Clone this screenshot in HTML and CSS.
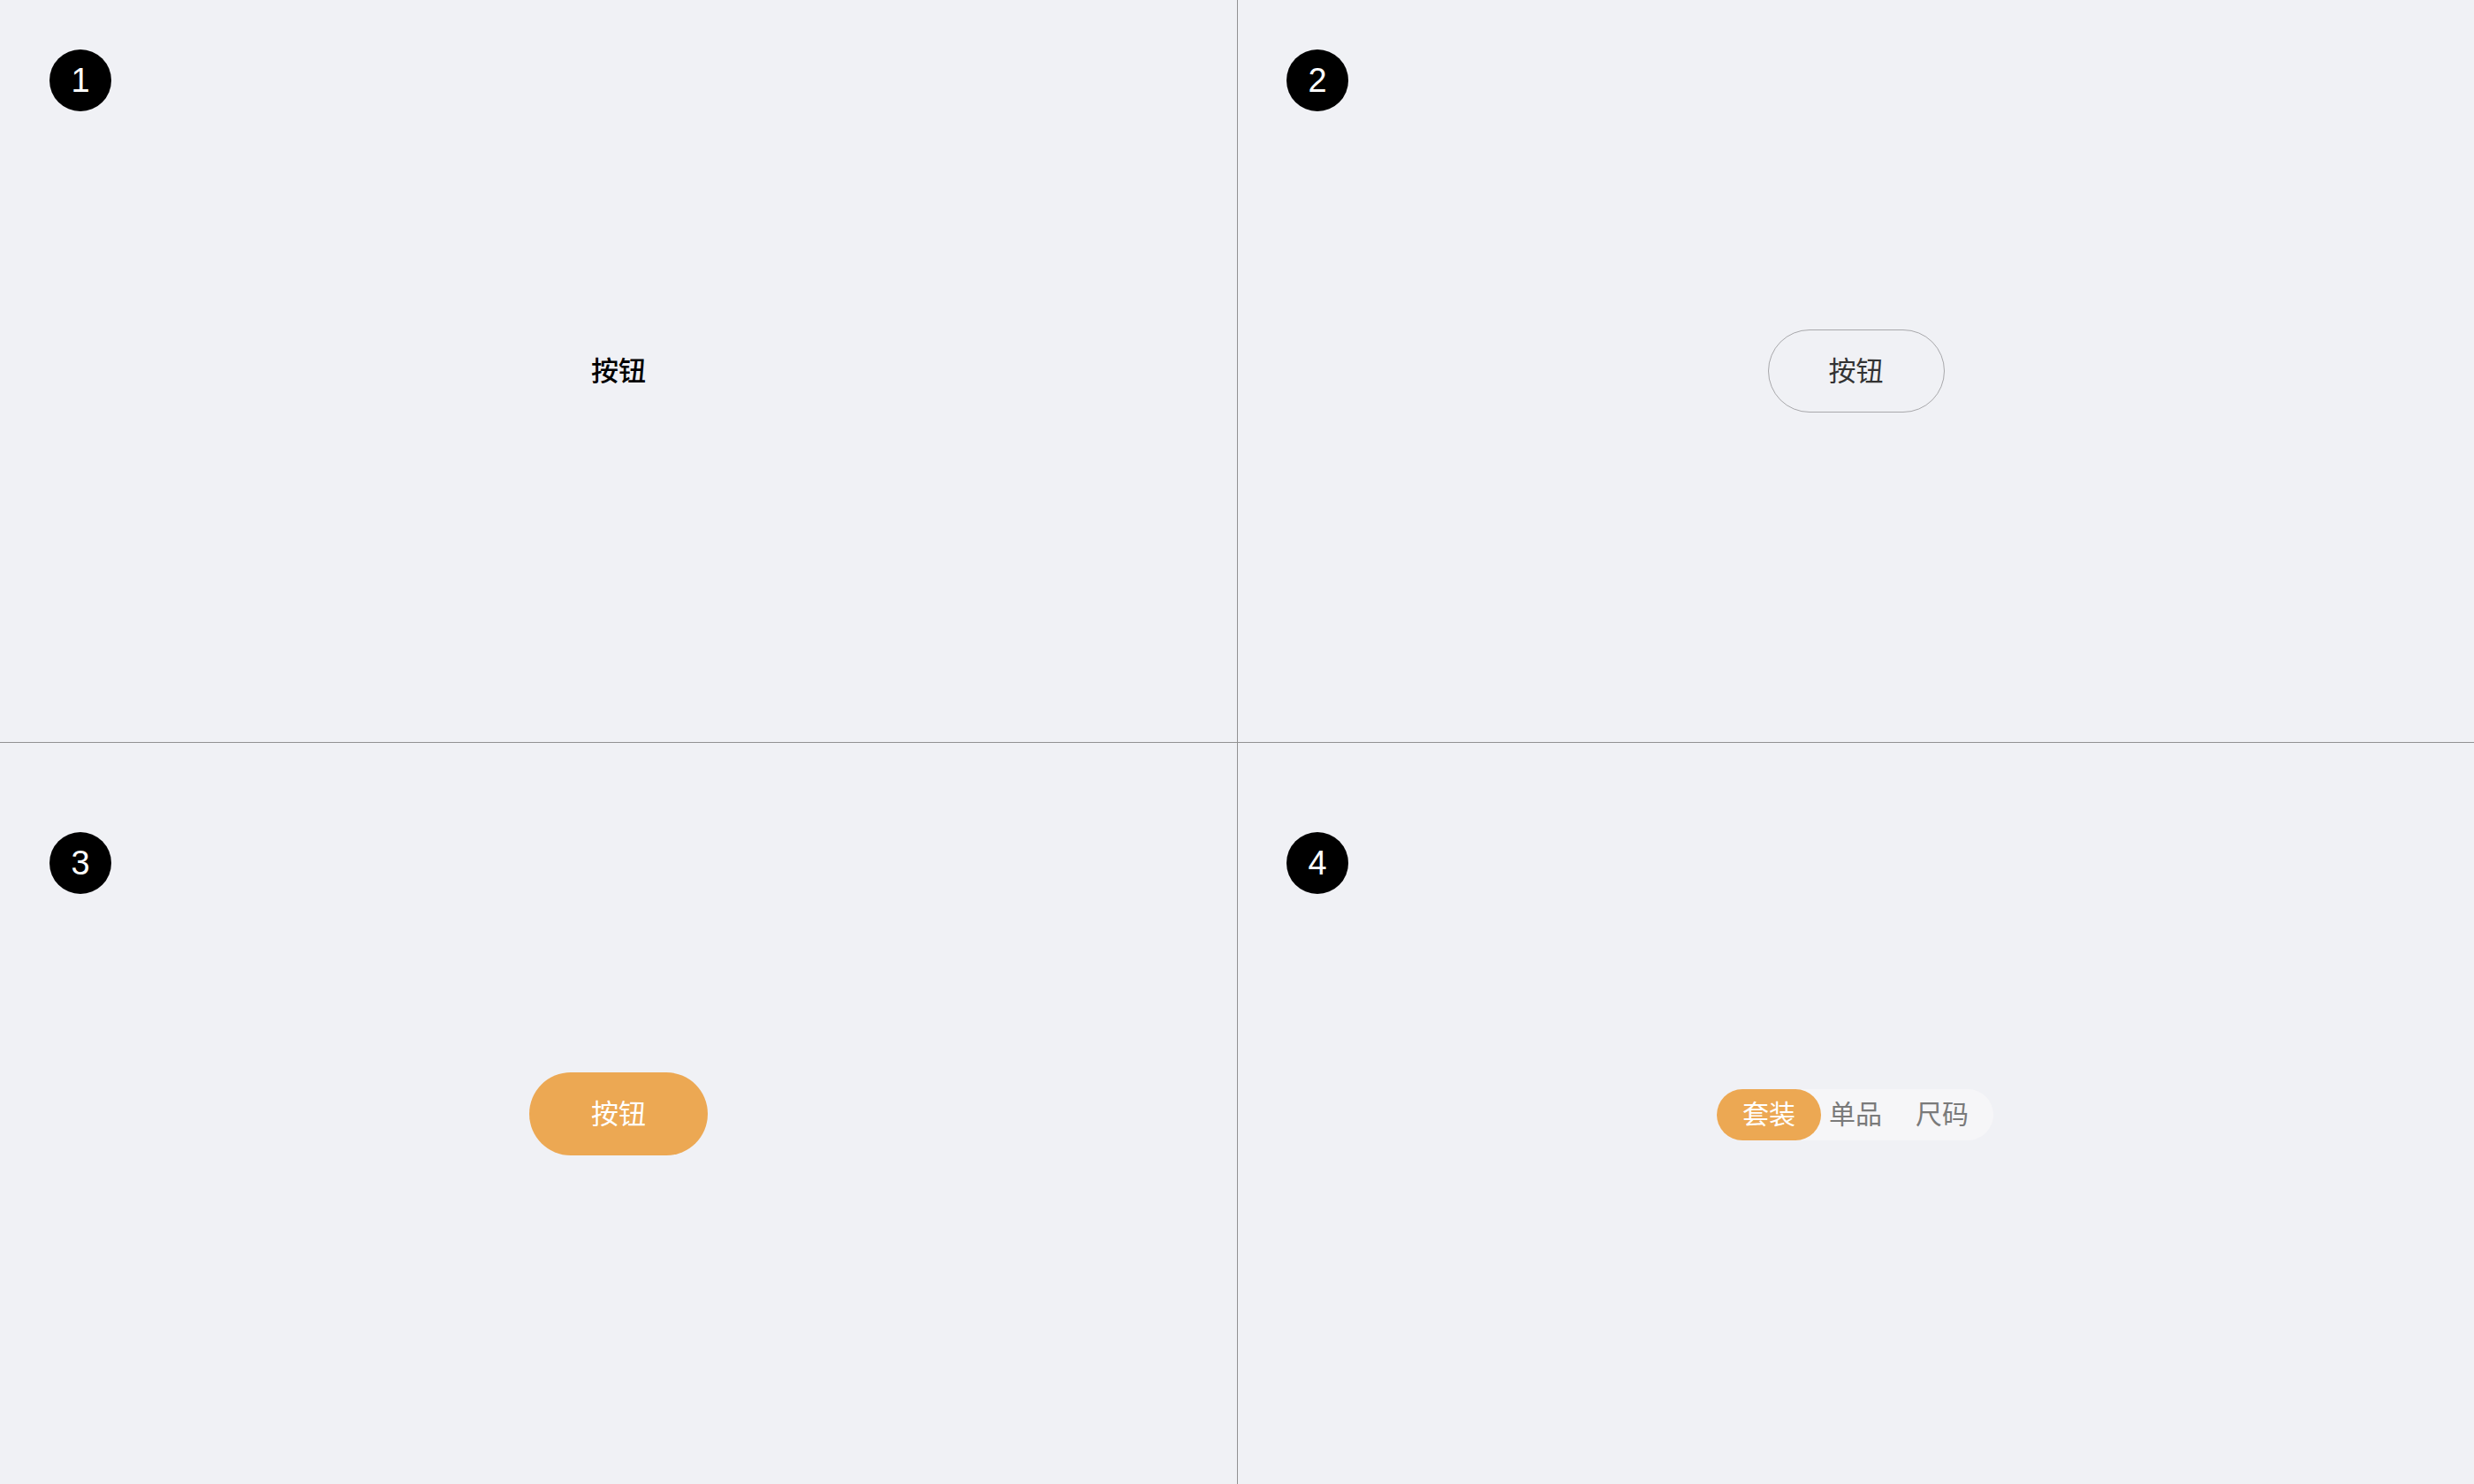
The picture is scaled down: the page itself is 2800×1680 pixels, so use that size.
FILE: index.html
```html
<!DOCTYPE html>
<html lang="zh">
<head>
<meta charset="utf-8">
<title>Buttons</title>
<link rel="stylesheet" href="styles.css">
</head>
<body>
<div class="board">
  <section class="panel">
    <span class="badge">1</span>
    <button class="btn btn-text">按钮</button>
  </section>
  <section class="panel panel-right">
    <span class="badge">2</span>
    <button class="btn btn-outline">按钮</button>
  </section>
  <section class="panel panel-bottom">
    <span class="badge badge-low">3</span>
    <button class="btn btn-fill">按钮</button>
  </section>
  <section class="panel panel-right panel-bottom">
    <span class="badge badge-low">4</span>
    <div class="segment">
      <span class="seg-item seg-active">套装</span>
      <span class="seg-item seg-mid">单品</span>
      <span class="seg-item seg-last">尺码</span>
    </div>
  </section>
</div>
</body>
</html>
```
FILE: styles.css
```css
* { box-sizing: border-box; }
html, body { margin: 0; padding: 0; }
body {
  background: #f0f1f5;
  font-family: "Noto Sans CJK SC", "Noto Sans", sans-serif;
  width: 2800px;
  height: 1680px;
  overflow: hidden;
}
.board {
  display: grid;
  grid-template-columns: 1400px 1400px;
  grid-template-rows: 840px 840px;
}
.panel {
  display: grid;
  grid-template-columns: 1fr;
  grid-template-rows: 1fr;
  background: #f0f1f5;
}
.panel-right { border-left: 1px solid #929292; }
.panel-bottom { border-top: 1px solid #929292; }
.panel > * { grid-area: 1 / 1; }
.badge {
  justify-self: start;
  align-self: start;
  margin: 56px 0 0 56px;
  width: 70px;
  height: 70px;
  border-radius: 50%;
  background: #000;
  color: #fff;
  font-family: "Liberation Sans", Arial, sans-serif;
  font-size: 38px;
  line-height: 1;
  display: flex;
  align-items: center;
  justify-content: center;
}
.panel-right .badge { margin-left: 55px; }
.badge-low { margin-top: 101px; }
.btn {
  justify-self: center;
  align-self: center;
  font-family: "Noto Sans CJK SC", sans-serif;
  font-size: 31px;
  line-height: 1;
  border: none;
  background: none;
  padding: 0 0 5px 0;
}
.btn-text {
  color: #000;
  font-weight: 500;
}
.btn-outline {
  width: 200px;
  height: 94px;
  border: 1.5px solid #a8a8ab;
  border-radius: 47px;
  color: #333;
}
.btn-fill {
  width: 202px;
  height: 94px;
  border-radius: 47px;
  background: #eca853;
  color: #fff;
}
.segment {
  justify-self: center;
  align-self: center;
  display: flex;
  align-items: center;
  height: 58px;
  border-radius: 29px;
  background: #f6f6f8;
  margin-left: -2px;
  margin-top: 2px;
}
.seg-item {
  font-size: 30px;
  line-height: 53px;
  height: 58px;
  color: #7a7a7a;
  border-radius: 29px;
}
.seg-active {
  background: #eca853;
  color: #fff;
  padding: 0 29px;
}
.seg-mid { padding: 0 19px 0 9px; }
.seg-last { padding: 0 28px 0 19px; }
```
